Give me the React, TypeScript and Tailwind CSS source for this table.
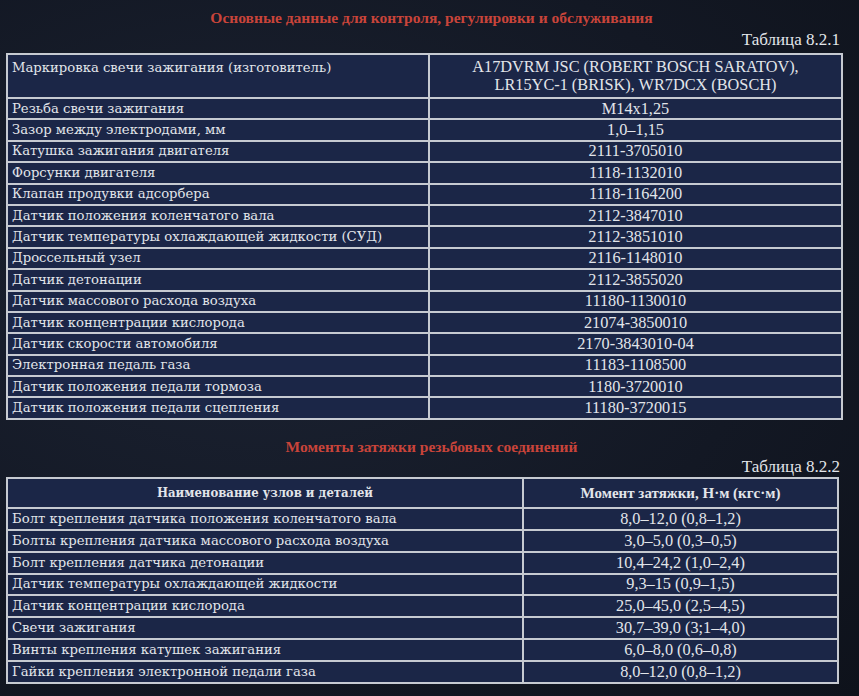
import React from "react";

const t1: [string, string][] = [
  ["Резьба свечи зажигания", "M14x1,25"],
  ["Зазор между электродами, мм", "1,0–1,15"],
  ["Катушка зажигания двигателя", "2111-3705010"],
  ["Форсунки двигателя", "1118-1132010"],
  ["Клапан продувки адсорбера", "1118-1164200"],
  ["Датчик положения коленчатого вала", "2112-3847010"],
  ["Датчик температуры охлаждающей жидкости (СУД)", "2112-3851010"],
  ["Дроссельный узел", "2116-1148010"],
  ["Датчик детонации", "2112-3855020"],
  ["Датчик массового расхода воздуха", "11180-1130010"],
  ["Датчик концентрации кислорода", "21074-3850010"],
  ["Датчик скорости автомобиля", "2170-3843010-04"],
  ["Электронная педаль газа", "11183-1108500"],
  ["Датчик положения педали тормоза", "1180-3720010"],
  ["Датчик положения педали сцепления", "11180-3720015"],
];

const t2: [string, string][] = [
  ["Болт крепления датчика положения коленчатого вала", "8,0–12,0 (0,8–1,2)"],
  ["Болты крепления датчика массового расхода воздуха", "3,0–5,0 (0,3–0,5)"],
  ["Болт крепления датчика детонации", "10,4–24,2 (1,0–2,4)"],
  ["Датчик температуры охлаждающей жидкости", "9,3–15 (0,9–1,5)"],
  ["Датчик концентрации кислорода", "25,0–45,0 (2,5–4,5)"],
  ["Свечи зажигания", "30,7–39,0 (3;1–4,0)"],
  ["Винты крепления катушек зажигания", "6,0–8,0 (0,6–0,8)"],
  ["Гайки крепления электронной педали газа", "8,0–12,0 (0,8–1,2)"],
];

const left = "font-['DejaVu_Serif',serif] text-[13.2px] text-[#e2e5ea] pl-[4px] whitespace-nowrap";
const right = "font-['Liberation_Serif',serif] text-[16.3px] text-[#e2e5ea] text-center whitespace-nowrap";
const cell = "border-2 border-[#c6cad1] bg-[#1b2647] p-0 leading-[18px]";

export default function App() {
  return (
    <div className="w-[859px] h-[696px] overflow-hidden bg-[radial-gradient(ellipse_at_30%_40%,#1c2333_0%,#131824_60%,#0e121b_100%)] flex flex-col">
      <div className="pt-[8px] h-[30px] text-center font-['Liberation_Serif',serif] font-bold text-[15.5px] leading-[20px] text-[#c9443a] pl-[4px]">
        Основные данные для контроля, регулировки и обслуживания
      </div>
      <div className="h-[23px] text-right pr-[19px] font-['Liberation_Serif',serif] text-[17px] leading-[20px] text-[#e2e5ea]">
        Таблица 8.2.1
      </div>
      <div className="pl-[6px]">
        <table className="border-collapse w-[837px]">
          <tbody>
            <tr className="h-[44px]">
              <td className={`${cell} ${left} align-top pt-[4px] w-[422px]`}>Маркировка свечи зажигания (изготовитель)</td>
              <td className={`${cell} ${right} leading-[18px]`}>
                A17DVRM JSC (ROBERT BOSCH SARATOV),
                <br />
                LR15YC-1 (BRISK), WR7DCX (BOSCH)
              </td>
            </tr>
            {t1.map(([a, b]) => (
              <tr key={a} className="h-[21.4px]">
                <td className={`${cell} ${left}`}>{a}</td>
                <td className={`${cell} ${right}`}>{b}</td>
              </tr>
            ))}
          </tbody>
        </table>
      </div>
      <div className="mt-[17px] h-[20px] text-center font-['Liberation_Serif',serif] font-bold text-[15.5px] leading-[20px] text-[#c9443a] pl-[4px]">
        Моменты затяжки резьбовых соединений
      </div>
      <div className="h-[20px] text-right pr-[19px] font-['Liberation_Serif',serif] text-[17px] leading-[20px] text-[#e2e5ea]">
        Таблица 8.2.2
      </div>
      <div className="pl-[6px]">
        <table className="border-collapse w-[833px]">
          <tbody>
            <tr className="h-[30px]">
              <td className={`${cell} font-['DejaVu_Serif_Condensed','DejaVu_Serif',serif] font-bold text-[13px] text-[#e2e5ea] text-center w-[516px]`}>
                Наименование узлов и деталей
              </td>
              <td className={`${cell} font-['Liberation_Serif',serif] font-bold text-[15px] text-[#e2e5ea] text-center`}>
                Момент затяжки, Н·м (кгс·м)
              </td>
            </tr>
            {t2.map(([a, b]) => (
              <tr key={a} className="h-[21.9px]">
                <td className={`${cell} ${left}`}>{a}</td>
                <td className={`${cell} ${right}`}>{b}</td>
              </tr>
            ))}
          </tbody>
        </table>
      </div>
    </div>
  );
}
